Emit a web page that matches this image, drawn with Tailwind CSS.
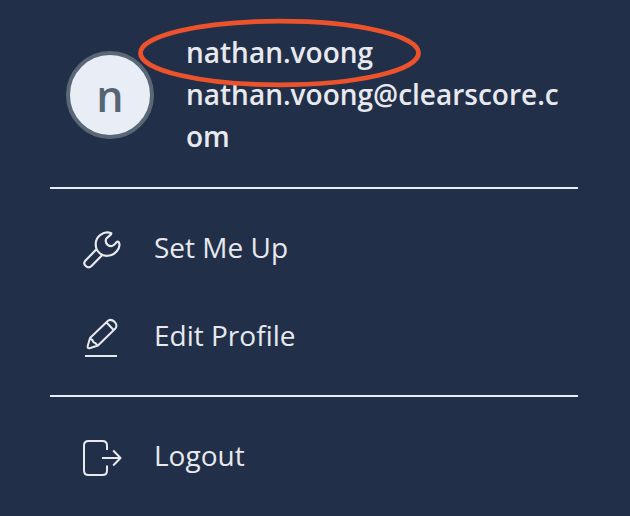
<!DOCTYPE html>
<html lang="en">
<head>
<meta charset="utf-8">
<title>Account menu</title>
<script src="https://cdn.jsdelivr.net/npm/@tailwindcss/browser@4"></script>
</head>
<body class="bg-[#222f48]">
<main class="relative w-[630px] h-[516px] overflow-hidden bg-[#222f48] pl-[50px] pr-[52px] pt-8 font-['Open_Sans','Noto_Sans',sans-serif] text-[28px] leading-[42px] text-[#e7e9ee]">
  <header class="flex items-start h-[157px] pl-4 border-b-2 border-[#e9ebf5] box-border">
    <div class="mt-[19px] flex items-center justify-center shrink-0 size-[88px] rounded-full border-4 border-[#5a6876] bg-[#e9edf5] text-[#566573] text-[43px] font-semibold leading-none"><span>n</span></div>
    <div class="-mt-px ml-8 w-[378px] font-semibold break-all">
      <p>nathan.voong</p>
      <p>nathan.voong@clearscore.com</p>
    </div>
  </header>
  <nav>
    <ul class="h-[208px] pt-[15px] border-b-2 border-[#e9ebf5]">
      <li class="flex items-center h-[88px] pl-7">
        <svg class="w-12 h-12 shrink-0" viewBox="0 0 48 48" fill="none" stroke="#e7e9ee" stroke-width="2.2" stroke-linecap="round" stroke-linejoin="round"><path d="M33.3 9.3C26 6.3 16.8 12.3 17.8 21.5C18 25.5 19 27 22 29.5C26 33 34 32.7 38.5 27.5C41.5 24 42 20.5 40.8 18.2C40 16.8 38.6 18 37.3 19.7C35.4 22.2 32.5 23 29.7 20.8C27.2 18.7 27.2 15.6 29 13.8L33 10.4Z M18 25.8L7.5 36.5Q4.8 39.5 7.8 42Q10.6 44.6 13.5 42L24 31.3"/></svg>
        <span class="ml-7 pb-0.5">Set Me Up</span>
      </li>
      <li class="flex items-center h-[88px] pl-7">
        <svg class="w-12 h-12 shrink-0" viewBox="0 0 48 48" fill="none" stroke="#e7e9ee" stroke-width="2" stroke-linecap="round" stroke-linejoin="round"><path d="M12 26L30 8.8Q33 6.5 36.5 9.8Q39.7 13 37.6 16.2L20 33.5L11.5 36.2Q9.2 36.5 9.7 34Z M12 26C13.5 28 13.8 28.3 14.3 27.7C15 30.3 15.6 31 17.7 31.2Q18 32.2 20 33.5 M28.5 10.5L35.7 18"/><path d="M7 44H39" stroke-linecap="butt"/></svg>
        <span class="ml-7 pb-0.5">Edit Profile</span>
      </li>
    </ul>
    <ul class="pt-[15px]">
      <li class="flex items-center h-[88px] pl-7">
        <svg class="w-12 h-12 shrink-0" viewBox="0 0 48 48" fill="none" stroke="#e7e9ee" stroke-width="2" stroke-linejoin="round"><path d="M29 18V13.5Q29 9 24.5 9H10.5Q6 9 6 13.5V38.5Q6 43 10.5 43H24.5Q29 43 29 38.5V33.5M24 26H42M35.2 18.5L42.5 26L35.2 33.5"/></svg>
        <span class="ml-7 pb-0.5">Logout</span>
      </li>
    </ul>
  </nav>
  <svg class="absolute left-0 top-0 w-[430px] h-[100px] pointer-events-none" viewBox="0 0 430 100" fill="none"><ellipse cx="279.5" cy="53" rx="139" ry="31.8" stroke="#ec532d" stroke-width="4.8"/></svg>
</main>
</body>
</html>
